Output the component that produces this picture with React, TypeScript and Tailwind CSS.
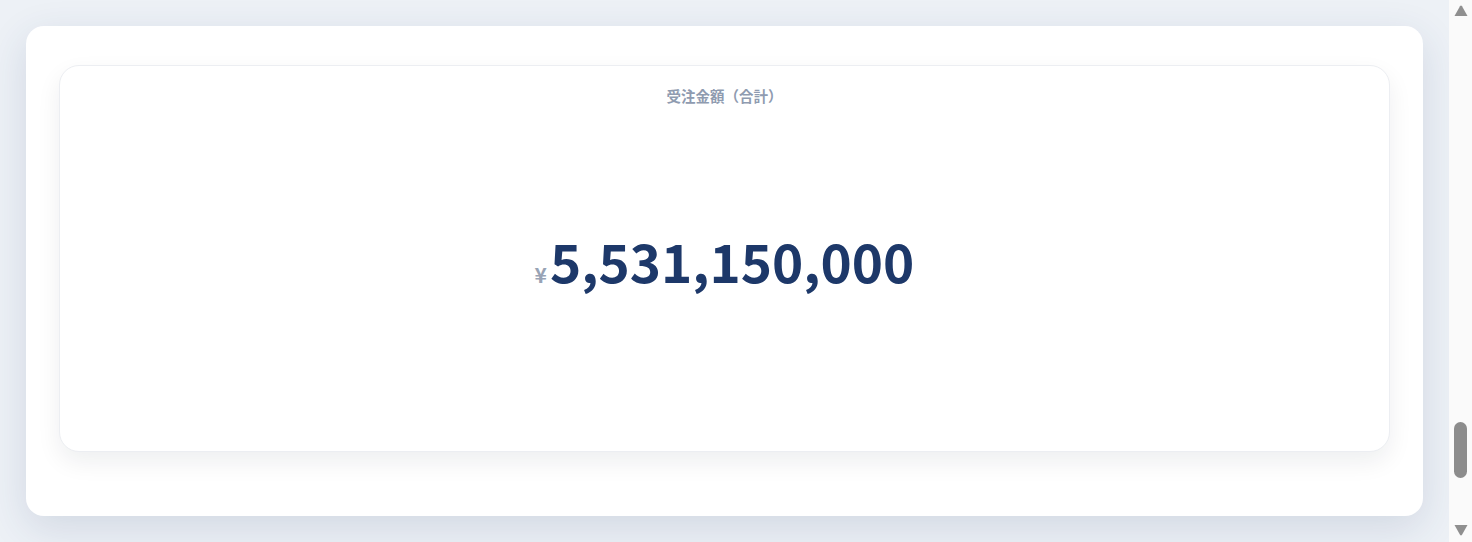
import React from 'react';

const jp = '"Noto Sans CJK JP", "Noto Sans", sans-serif';

// Total order amount, shown as a single KPI tile
const TotalOrdersCard = ({ label, amount }: { label: string; amount: number }) => (
  <div className="flex h-[387px] flex-col items-center rounded-[20px] border border-[#eceef2] bg-white pt-[20px] shadow-[0_10px_24px_rgba(15,23,42,0.07)]">
    <p className="text-[14.5px] font-bold leading-5 text-[#8f9bb0]">{label}</p>
    <div className="mt-[128px] flex items-baseline">
      <span className="mr-[3px] text-[21px] font-bold text-[#98a3b5]">¥</span>
      <span className="text-[53px] font-bold leading-none text-[#1d3869]">
        {amount.toLocaleString('ja-JP')}
      </span>
    </div>
  </div>
);

const Scrollbar = () => (
  <div className="flex w-[23px] flex-col items-center bg-[#fafafa]">
    <svg width="14" height="12" viewBox="0 0 14 12" className="mt-[5px]">
      <path d="M6 1.2 Q7 0 8 1.2 L13.5 11 L0.5 11 Z" fill="#8f8f8f" />
    </svg>
    <div className="flex-1 pt-[405px]">
      <div className="h-[56px] w-[13px] rounded-full bg-[#8c8c8c]" />
    </div>
    <svg width="14" height="12" viewBox="0 0 14 12" className="mb-[6px]">
      <path d="M0.5 1 L13.5 1 L8 10.8 Q7 12 6 10.8 Z" fill="#8f8f8f" />
    </svg>
  </div>
);

export default function App() {
  return (
    <div className="flex h-[542px] w-full overflow-hidden bg-[#edf1f6]" style={{ fontFamily: jp }}>
      <main className="flex-1 p-[26px]">
        <section className="h-[490px] rounded-[18px] bg-white px-[33px] pt-[39px] shadow-[0_12px_40px_rgba(40,66,110,0.14)]">
          <TotalOrdersCard label="受注金額（合計）" amount={5531150000} />
        </section>
      </main>
      <Scrollbar />
    </div>
  );
}
